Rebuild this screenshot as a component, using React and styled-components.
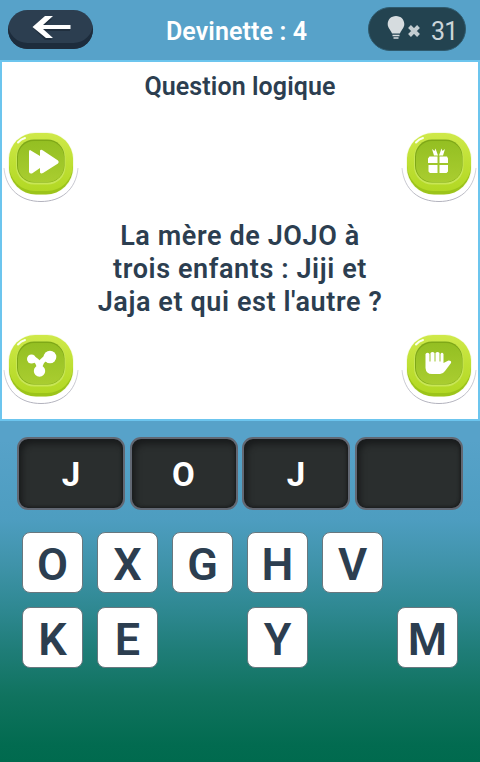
import React from 'react'
import styled, { createGlobalStyle } from 'styled-components'


const answer = ['J', 'O', 'J', '']

const letters = [
    ['O', 'X', 'G', 'H', 'V', ''],
    ['K', 'E', '', 'Y', '', 'M'],
]

function GreenButton({ label, children }) {
  return (
    <RoundButton aria-label={label}>
        <svg width='76' height='74' viewBox='0 0 76 74'>
            <defs>
                <linearGradient id='lime' x1='0' y1='0' x2='0' y2='1'>
                    <stop offset='0' stopColor='#cfe94a' />
                    <stop offset='0.5' stopColor='#bfe034' />
                    <stop offset='1' stopColor='#b2d824' />
                </linearGradient>
                <linearGradient id='well' x1='0' y1='0' x2='0' y2='1'>
                    <stop offset='0' stopColor='#94bf22' />
                    <stop offset='1' stopColor='#a9cd30' />
                </linearGradient>
                <linearGradient id='rim' x1='0' y1='0' x2='0' y2='1'>
                    <stop offset='0' stopColor='#a9a9b5' stopOpacity='0.5' />
                    <stop offset='1' stopColor='#a9a9b5' />
                </linearGradient>
            </defs>
            <path d='M1 38C3 60 18 71.5 38 71.5S73 60 75 38' fill='none' stroke='url(#rim)' strokeWidth='0.9' />
            <rect x='5' y='2' width='66' height='63' rx='28' fill='#f7fbe6' />
            <rect x='6' y='6' width='64' height='58.500' rx='27' fill='#9cc41a' />
            <rect x='6' y='3' width='64' height='58' rx='26' fill='url(#lime)' />
            <rect x='13' y='9.5' width='49.500' height='45' rx='18' fill='#c8e655' />
            <rect x='14' y='9.5' width='47.500' height='43' rx='17' fill='#7fa817' />
            <rect x='15' y='11' width='46' height='41' rx='16' fill='url(#well)' />
            <path d='M15 12.500Q18 9 22 8' fill='none' stroke='#fbfff0' strokeWidth='2' strokeLinecap='round' />
            {children}
        </svg>
    </RoundButton>
  )
}

function App() {
  return (
    <Screen>
        <GlobalStyle />
        <Header>
            <BackButton aria-label='Retour'>
                <svg width='40' height='24' viewBox='0 0 40 24'>
                    <path d='M1.500 12.500L13 3H20L11.500 10.500H38V15H11.500L20 24H13Z' fill='#14202c' opacity='0.5' />
                    <path d='M0.500 11L13 0H21L11 9H38.500V13H11L21 22H14Z' fill='#fff' />
                </svg>
            </BackButton>
            <Level>Devinette : 4</Level>
            <Hints>
                <svg width='36' height='26' viewBox='0 0 36 26'>
                    <path d='M9 1C4 1 .7 4.600.7 9C.7 13 3.500 14.500 5 18.500H13C14.500 14.500 17.300 13 17.300 9C17.300 4.600 14 1 9 1Z' fill='#d6dcdf' />
                    <path d='M5.500 20.500H12.500M6.500 23H11.500' stroke='#d6dcdf' strokeWidth='1.400' />
                    <path d='M22.500 11.500L31.500 20.500M31.500 11.500L22.500 20.500' stroke='#c3cdd1' strokeWidth='4' />
                </svg>
                <span>31</span>
            </Hints>
        </Header>

        <Card>
            <Title>Question logique</Title>
            <ButtonRow>
                <GreenButton label='Passer'>
                    <path d='M27 20L37 26V20.500Q38 19 40 20.500L55 30.500Q56.500 32 55 33.500L40 43Q38 44 37 42.500V38L29 43.500Q26.500 44 26 42V22Q26 20 27 20Z' fill='#fff' />
                </GreenButton>
                <GreenButton label='Cadeau'>
                    <path d='M28.500 26.500H36.500V33H27V28.500ZM38.500 26.500H46L47 28.500V33H38.500ZM27.500 35H36.500V43H29L27.500 41.500ZM38.500 35H47V41.500L45.500 43H38.500ZM31 19L33.500 21L34.500 18.500L37 25.500H33ZM44 19L41.500 21L40.500 18.500L38 25.500H42Z' fill='#fff' />
                </GreenButton>
            </ButtonRow>
            <Question>
                La mère de JOJO à<br />
                trois enfants : Jiji et<br />
                Jaja et qui est l'autre ?
            </Question>
            <ButtonRow>
                <GreenButton label='Partager'>
                    <path d='M28.500 27Q36 27 36.500 38Q37 27 46 25' fill='none' stroke='#fff' strokeWidth='5' />
                    <circle cx='28.500' cy='27' r='4.500' fill='#fff' />
                    <circle cx='47' cy='25' r='6.300' fill='#fff' />
                    <circle cx='36.500' cy='39' r='5.700' fill='#fff' />
                </GreenButton>
                <GreenButton label='Aide'>
                    <path d='M24.500 22Q26.500 19.500 28.500 22V29.500H29.500V21Q31.500 19 33.500 21V29.500H34.500V21Q36.500 19 38.500 21V29.500H39.500V22Q41 19.500 42.500 22V31L47.500 28.500Q51 28.500 50 31L44 39Q42 42 39 42H31Q25 42 24.500 36Z' fill='#fff' />
                </GreenButton>
            </ButtonRow>
        </Card>

        <Answer>
            {answer.map((letter, i) => <Slot key={i}>{letter}</Slot>)}
        </Answer>

        <Keyboard>
            {letters.flat().map((letter, i) => (
                <Key key={i} $used={!letter}>{letter}</Key>
            ))}
        </Keyboard>
    </Screen>
  )
}

const GlobalStyle = createGlobalStyle`
    body{
        margin: 0;
    }

    *{
        box-sizing: border-box;
    }

    button{
        border: none;
        padding: 0;
        font-family: inherit;
        cursor: pointer;
    }
`

const Screen = styled.div`
    width: 480px;
    height: 762px;
    display: flex;
    flex-direction: column;
    overflow: hidden;
    font-family: Roboto, 'Liberation Sans', sans-serif;
    color: #2c3e50;
    background: linear-gradient(180deg, #57a2c9 0, #57a2c9 440px, #4d9dc0 520px, #3f93a9 565px, #2e8891 610px, #1f7d78 650px, #10735f 695px, #026b50 745px, #006a4e 762px);
`

const Header = styled.header`
    height: 60px;
    display: grid;
    grid-template-columns: 85px 1fr 98px;
    align-items: start;
    padding: 7px 14px 0 8px;
`

const BackButton = styled.button`
    height: 39px;
    margin-top: 3px;
    display: flex;
    padding: 6px 0 0 24px;
    border-radius: 20px;
    background: #2c3e50;
    box-shadow: inset 0 -6px 0 #1d2c3c;
`

const Level = styled.h1`
    margin: 0;
    padding-left: 12px;
    text-align: center;
    font-size: 25px;
    line-height: 50px;
    font-weight: 600;
    letter-spacing: 0.1px;
    color: #fff;
    white-space: nowrap;
`

const Hints = styled.div`
    height: 44px;
    display: flex;
    align-items: center;
    padding-left: 18px;
    border-radius: 22px;
    background: #234350;
    border: 1px solid #2f5a6d;

    span{
        margin: 5px 0 0 8px;
        font-size: 25px;
        line-height: 30px;
        letter-spacing: -0.8px;
        color: #ccd5d9;
    }

    svg{
        margin-top: -2px;
    }
`

const Card = styled.main`
    height: 361px;
    border: 2px solid #6cc5ee;
    background: #fff;
`

const Title = styled.h2`
    height: 50px;
    margin: 0 0 18px;
    text-align: center;
    font-size: 25px;
    line-height: 50px;
    font-weight: 600;
    letter-spacing: 0.1px;
`

const ButtonRow = styled.div`
    display: flex;
    justify-content: space-between;
    padding: 0 1px;
`

const RoundButton = styled.button`
    height: 74px;
    background: none;

    svg{
        display: block;
    }
`

const Question = styled.p`
    height: 128px;
    margin: 0;
    padding-top: 16px;
    text-align: center;
    font-size: 27px;
    line-height: 33px;
    font-weight: 600;
    letter-spacing: 0.6px;
`

const Answer = styled.div`
    display: grid;
    grid-template-columns: repeat(4, 108px);
    column-gap: 4.5px;
    padding: 16px 0 0 17px;
`

const Slot = styled.div`
    height: 73px;
    display: flex;
    align-items: center;
    justify-content: center;
    padding-top: 2px;
    border: 2px solid #626873;
    border-radius: 11px;
    background: #2a2e2e;
    box-shadow: inset 3px 5px 6px #191b1c, inset -1px -1px 3px #191b1c;
    font-size: 33px;
    font-weight: 700;
    color: #fff;
`

const Keyboard = styled.div`
    display: grid;
    grid-template-columns: repeat(6, 61px);
    gap: 14px;
    padding: 22px 0 0 22px;
`

const Key = styled.button`
    height: 61px;
    padding-top: 5px;
    border: 1px solid #68777e;
    border-radius: 8px;
    background: #fff;
    color: #2c3e50;
    font-size: 45px;
    line-height: 54px;
    font-weight: 600;
    visibility: ${({ $used }) => ($used ? 'hidden' : 'visible')};
`

export default App
